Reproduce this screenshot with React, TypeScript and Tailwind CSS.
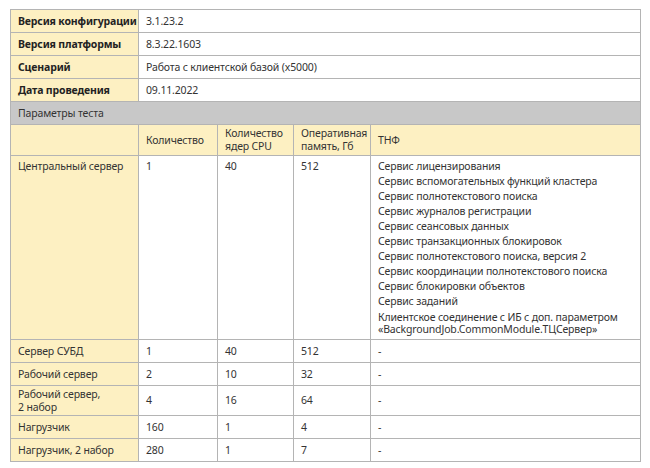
export default function App() {
  const y = "bg-[#fdf0c2]";
  const td = "border border-[#b4b4b4] px-[7px] align-middle";
  const list = ["Сервис лицензирования","Сервис вспомогательных функций кластера","Сервис полнотекстового поиска","Сервис журналов регистрации","Сервис сеансовых данных","Сервис транзакционных блокировок","Сервис полнотекстового поиска, версия 2","Сервис координации полнотекстового поиска","Сервис блокировки объектов","Сервис заданий"];
  const rows: [string, string, string, string, number][] = [
    ["Сервер СУБД","1","40","512",23],["Рабочий сервер","2","10","32",23],["Рабочий сервер,\n2 набор","4","16","64",30],["Нагрузчик","160","1","4",23],["Нагрузчик, 2 набор","280","1","7",23]];
  return (
    <div className="bg-white w-[650px] h-[468px] pt-[9px] pl-[10px] text-[10.5px] tracking-[-0.15px] leading-[15px] text-[#333] font-['Open_Sans',sans-serif]">
      <table className="border-collapse table-fixed w-[631px]">
        <colgroup><col className="w-[128px]"/><col className="w-[79px]"/><col className="w-[76px]"/><col className="w-[77px]"/><col/></colgroup>
        <tbody>
          {[["Версия конфигурации","3.1.23.2"],["Версия платформы","8.3.22.1603"],["Сценарий","Работа с клиентской базой (x5000)"],["Дата проведения","09.11.2022"]].map(([a,b])=>(
            <tr key={a} className="h-[23px]"><td className={`${td} ${y} font-bold text-[#222] whitespace-nowrap`}>{a}</td><td colSpan={4} className={td}>{b}</td></tr>
          ))}
          <tr className="h-[23px]"><td colSpan={5} className={`${td} bg-[#c8c8c8]`}>Параметры теста</td></tr>
          <tr className="h-[31px]"><td className={`${td} ${y}`}></td><td className={`${td} ${y}`}>Количество</td><td className={`${td} ${y} leading-[13px]`}>Количество ядер CPU</td><td className={`${td} ${y} leading-[13px]`}>Оперативная память, Гб</td><td className={`${td} ${y}`}>ТНФ</td></tr>
          <tr className="h-[184px]">
            <td className={`${td} ${y} !align-top pt-[3px] whitespace-nowrap`}>Центральный сервер</td>
            <td className={`${td} !align-top pt-[3px]`}>1</td>
            <td className={`${td} !align-top pt-[3px]`}>40</td>
            <td className={`${td} !align-top pt-[3px]`}>512</td>
            <td className={`${td} !align-top pt-[3px]`}>{list.map(l=><div key={l}>{l}</div>)}<div className="leading-[12px] mt-[2px] pb-[3px]">Клиентское соединение с ИБ с доп. параметром<br/>«BackgroundJob.CommonModule.ТЦСервер»</div></td>
          </tr>
          {rows.map(([a,b,c,d,h])=>(
            <tr key={a} style={{height:h}}><td className={`${td} ${y} whitespace-pre-line leading-[13px]`}>{a}</td><td className={td}>{b}</td><td className={td}>{c}</td><td className={td}>{d}</td><td className={td}>-</td></tr>
          ))}
        </tbody>
      </table>
    </div>
  );
}
